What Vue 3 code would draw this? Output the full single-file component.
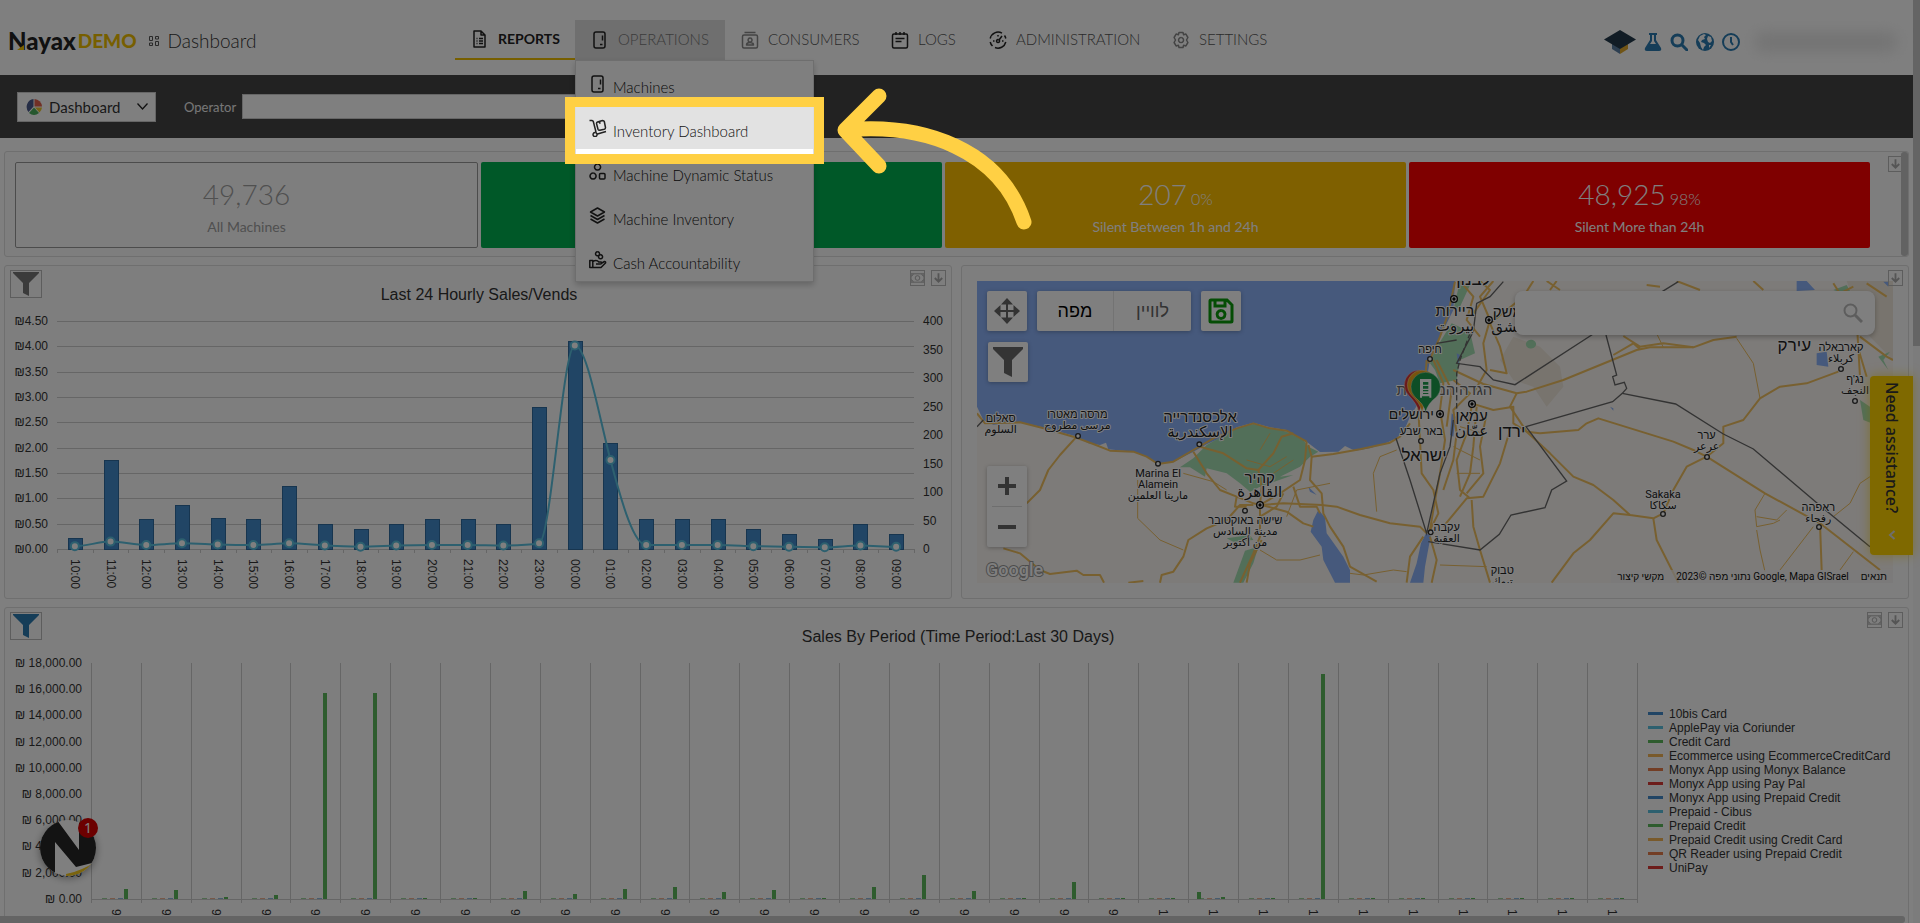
<script setup>
const icons = {
    report: 'M3 1h7l4 4v12H3zM10 1v4h4M5.500 8.500h1M8 8.500h4M5.500 11h1M8 11h4M5.500 13.500h1M8 13.500h4',
    machine: 'M5 1h7q2 0 2 2v12q0 2-2 2H5q-2 0-2-2V3q0-2 2-2zM11.500 4.500v5M9 13.500h2.500',
    consumer: 'M3 4h12q1.500 0 1.500 1.500v10q0 1.500-1.500 1.500H3q-1.500 0-1.500-1.500v-10Q1.500 4 3 4zM3.500 1.500h11M9 7a2 2 0 1 0 .1 0M5.500 14q0-2.500 3.500-2.500t3.500 2.500z',
    log: 'M3 3h12q1.500 0 1.500 1.500v11q0 1.500-1.500 1.500H3q-1.500 0-1.500-1.500v-11Q1.500 3 3 3zM5 1v3M9 1v3M13 1v3M4.500 7.500h9M4.500 10.500h6',
    gauge: 'M3.500 15A8 8 0 0 1 1.200 11M1.200 7.500A8 8 0 0 1 13 2.200M15.500 4.500A8 8 0 0 1 16.800 7.500M16.800 11A8 8 0 0 1 6 16.500M9 8.500a1.500 1.500 0 1 0 .1 0M10 9l3-4M4 10h1.500M9 4v1.500M13 10h1.500',
    gear: 'M7 1.500h4l.6 2.200 2.300-.6 2 3.400L14.500 9l1.400 2.500-2 3.400-2.300-.6L11 16.500H7l-.6-2.200-2.300.6-2-3.400L3.500 9 2.100 6.500l2-3.400 2.300.6zM9 6.500a2.500 2.500 0 1 0 .1 0',
    trolley: 'M.5 1.500h2.500q1 0 1.300 1L7 13M6 13.500a2 2 0 1 0 .1 0M8.500 15l8.500-2.500M8.500 3l5-1.500q1.500 0 1.800 1L16.500 8.500q0 1.500-1.200 1.800l-4.500 1q-1.500 0-1.800-1L7.500 4.500q0-1.200 1-1.500zM10.500 2.800l.6 2',
    nodes: 'M8.500 1a3 3 0 1 0 .1 0M4 10a3 3 0 1 0 .1 0M11.500 10.500h3.500q1 0 1 1V15q0 1-1 1h-3.500q-1 0-1-1v-3.500q0-1 1-1z',
    layers: 'M8.500 1l7 4-7 4-7-4zM1.500 8.500l7 4 7-4M1.500 12l7 4 7-4',
    cash: 'M8.500 .8a2 2 0 1 0 .1 0M11.500 3.800a2 2 0 1 0 .1 0M.8 9.500h3v7h-3zM3.800 10.500q4-2 6 .5h2.500q1 2-1 2H7M12 12.500l3.500-2q1.500 0 1 1.500l-4.500 4.500H3.800'
}

const nav = [
    { text: 'REPORTS', icon: 'report', state: 'current' },
    { text: 'OPERATIONS', icon: 'machine', state: 'open' },
    { text: 'CONSUMERS', icon: 'consumer', state: 'pale' },
    { text: 'LOGS', icon: 'log' },
    { text: 'ADMINISTRATION', icon: 'gauge' },
    { text: 'SETTINGS', icon: 'gear', state: 'pale' }
]

const menu = [
    { text: 'Machines', icon: 'machine' },
    { text: 'Inventory Dashboard', icon: 'trolley', active: true },
    { text: 'Machine Dynamic Status', icon: 'nodes' },
    { text: 'Machine Inventory', icon: 'layers' },
    { text: 'Cash Accountability', icon: 'cash' }
]

const cards = [
    { value: '49,736', label: 'All Machines', color: 'plain' },
    { value: '', label: '', color: 'green' },
    { value: '207', share: '0%', label: 'Silent Between 1h and 24h', color: 'amber' },
    { value: '48,925', share: '98%', label: 'Silent More than 24h', color: 'red' }
]

// hourly chart
const amounts = [.22, 1.76, .6, .87, .62, .6, 1.25, .5, .4, .5, .6, .6, .5, 2.8, 4.1, 2.1, .6, .6, .6, .4, .3, .2, .5, .3]
const vends = [5, 13, 7, 10, 8, 7, 10, 6, 4, 6, 7, 7, 6, 10, 357, 156, 7, 7, 7, 5, 4, 3, 6, 4]
const hourStep = 857 / 24
const hours = amounts.map((amount, i) => ({
    x: 57 + hourStep * (i + .5),
    bar: amount / 4.5 * 228,
    y: 549 - vends[i] / 400 * 228,
    label: String((i + 10) % 24).padStart(2, '0') + ':00'
}))

// monotone curve: the tangent is flat wherever the direction changes
function slope(i) {
    if(i === 0 || i === hours.length - 1) return 0
    const a = hours[i].y - hours[i - 1].y
    const b = hours[i + 1].y - hours[i].y
    return a * b <= 0 ? 0 : 2 * a * b / (a + b) * 1.4
}
const vendLine = hours.map((p, i) => {
    if(i === 0) return `M${p.x} ${p.y}`
    const q = hours[i - 1]
    const d = hourStep / 3
    return `C${q.x + d} ${q.y + slope(i - 1) / 3} ${p.x - d} ${p.y - slope(i) / 3} ${p.x} ${p.y}`
}).join('')

// sales by period
const dayHeights = [10, 9, 2, 4, 206, 206, 1, 1, 8, 5, 10, 12, 7, 9, 1, 12, 24, 8, 1, 17, 1, 1, 2, 1, 225, 1, 1, 1, 1, 1, 1]
const dayStep = 1546 / 31
const days = dayHeights.map((height, i) => ({
    x: 91 + Math.round(dayStep * i),
    height,
    label: i < 21 ? `9/${i + 10}/2023` : `10/${i - 20}/2023`
}))

const legend = [
    ['10bis Card', '#428bca'],
    ['ApplePay via Coriunder', '#5bc0de'],
    ['Credit Card', '#5cb85c'],
    ['Ecommerce using EcommerceCreditCard', '#f2b557'],
    ['Monyx App using Monyx Balance', '#e67d4a'],
    ['Monyx App using Pay Pal', '#da3b36'],
    ['Monyx App using Prepaid Credit', '#428bca'],
    ['Prepaid - Cibus', '#5bc0de'],
    ['Prepaid Credit', '#5cb85c'],
    ['Prepaid Credit using Credit Card', '#f2b557'],
    ['QR Reader using Prepaid Credit', '#e67d4a'],
    ['UniPay', '#da3b36']
]

// map, drawn at three units per pixel
const roads = [
    'M51 460L75 490L180 487L260 507L340 530L400 552L450 572L520 575L560 590L594 612L640 605L700 570L760 535L830 505L880 490L930 505L980 512L1040 545',
    'M350 530L300 585L265 630L240 690L200 730',
    'M130 865L180 880L240 930L270 942L350 932L370 945L420 945L432 968',
    'M505 968L550 963M600 968L605 945L640 935L670 890L685 840L740 805L800 780L840 735L880 735',
    'M700 575L740 640L780 690L830 710L880 730L900 735',
    'M720 560L790 580L860 625L895 630L905 680L900 735',
    'M830 710L825 740L860 740M895 630L940 580L965 530L1000 520',
    'M900 735L960 700L1020 660L1035 600L1040 545',
    'M900 735L970 730L1085 735L1130 740L1200 765L1290 790L1380 800L1400 820',
    'M1045 555L1055 590L1120 582L1200 568L1290 548L1320 530L1350 490',
    'M1055 590L1050 660L1085 700L1090 760L1110 800L1150 860L1170 920L1250 965',
    'M900 745L900 830L880 880L840 968M905 840L870 910L860 968M905 735L980 755L1030 790L1060 800',
    'M1000 680L1020 740L1070 740L1080 760M970 700L950 740L900 770',
    'M1410 830L1430 900L1415 968M1340 968L1350 890L1390 830',
    'M1400 300L1395 370L1375 450L1380 540L1385 640L1420 690L1435 760L1405 820',
    'M1420 300L1450 370L1440 450L1455 540L1440 640L1425 720L1410 810M1430 300L1475 390L1460 500',
    'M1485 65L1465 160L1440 230L1405 310',
    'M1500 63L1540 110L1520 180L1560 230M1600 63L1560 110L1590 180L1570 250L1580 330L1540 400',
    'M1560 63L1590 90L1540 160M1720 63L1690 110L1640 150L1590 190L1620 260L1640 340L1590 330',
    'M1760 63L1800 90M1770 90L1790 63M2060 75L2100 80M2150 63L2220 90M2380 63L2410 90',
    'M1480 330L1570 372L1670 400L1700 395L1810 360L2030 270L2070 262L2200 262L2260 240L2330 230',
    'M1960 285L2020 250L2040 268M1990 228L2040 260L2110 250L2200 262',
    'M1700 515L1740 520L1855 510L1880 490L1915 475L2140 545L2200 570L2240 590L2415 700L2580 790L2760 930',
    'M2240 590L2290 550L2290 500L2350 480L2400 415L2460 380L2540 370L2635 335',
    'M2240 590L2180 620L2140 690L2110 760L2080 775L2010 765L1960 720L1900 675L1840 650L1770 580L1700 515L1650 440L1670 400',
    'M2010 765L1960 760L1890 840L1840 880L1775 968M2080 775L2090 840L2155 968',
    'M2580 790L2585 930M1535 430L1600 450L1660 440L1660 490L1700 515M1650 510L1620 610L1570 710L1520 715L1450 800',
    'M1535 720L1540 800L1560 870L1590 968M1535 440L1520 520L1490 600L1500 690L1530 715M1550 440L1540 560L1530 640L1500 710',
    'M1480 360L1530 400L1480 450L1490 520L1480 600L1450 690M1580 460L1560 560L1570 640L1520 700',
    'M2620 70L2690 180L2700 350M2720 70L2780 110M2640 100L2680 80M2700 230L2780 290L2799 300M2690 250L2720 350'
]
const thinRoads = [
    'M533 660L533 775L600 840L670 870',
    'M1310 570L1260 590L1240 640L1250 755',
    'M900 870L950 900L1020 900L1080 885M1170 940L1210 945L1300 930L1340 935',
    'M930 520L900 570M860 600L930 620L980 590M940 640L1000 600',
    'M670 640L760 665L800 690M980 770L1010 690L1110 670',
    'M2330 235L2380 310L2400 415M2080 200L2110 262',
    'M2415 700L2385 750L2390 800L2440 790L2460 780M2390 770L2450 780L2480 750M2390 810L2400 870L2415 935M2560 800L2460 930',
    'M2620 770L2670 730L2700 670L2730 650M2680 875L2640 930',
    'M1440 915L1580 920M1480 560L1560 600M1500 500L1570 520M1490 640L1560 640'
]
const borders = [
    'M1630 65L1590 110L1550 130L1540 215L1490 310L1560 320L1600 360L1665 374L1895 225L2155 65',
    'M1938 225L1970 345L1958 350L1965 375L1993 367L2000 385L1987 400L1958 425L1698 500L1820 663L1775 690L1755 743L1653 765L1618 823L1560 870L1405 845',
    'M1308 535L1350 660L1400 820L1440 640L1470 560L1480 480',
    'M1987 400L2147 432L2290 522L2380 567L2578 735L2730 860',
    'M51 500L70 480M1430 250L1490 240'
]
const places = [
    { x: 122, y: 487, size: 33, lines: ['סאלום', 'السلوم'] },
    { x: 352, y: 474, size: 33, lines: ['מרסה מאטרו', 'مرسى مطروح'], dot: [354, 528] },
    { x: 720, y: 487, size: 45, lines: ['אלכסנדרייה', 'الإسكندرية'], dot: [718, 553] },
    { x: 594, y: 650, size: 33, lines: ['Marina El', 'Alamein', 'مارينا العلمين'], dot: [594, 611] },
    { x: 899, y: 668, size: 45, lines: ['קהיר', 'القاهرة'], capital: [900, 735] },
    { x: 856, y: 793, size: 33, lines: ['שישה באוקטובר', 'مدينة السادس', 'من أكتوبر'], dot: [855, 752] },
    { x: 1540, y: 75, size: 51, lines: ['לבנון'], capital: [1482, 117] },
    { x: 1485, y: 168, size: 45, lines: ['ביירות', 'بيروت'] },
    { x: 1655, y: 172, size: 45, lines: ['דמשק', 'دمشق'], capital: [1587, 180] },
    { x: 1410, y: 278, size: 33, lines: ['חיפה'], dot: [1410, 297] },
    { x: 1453, y: 405, size: 45, lines: ['הגדה המערבית'], pale: true },
    { x: 1354, y: 476, size: 42, lines: ['ירושלים'], capital: [1440, 462] },
    { x: 1384, y: 526, size: 33, lines: ['באר שבע'], dot: [1383, 543] },
    { x: 1392, y: 602, size: 51, lines: ['ישראל'] },
    { x: 1535, y: 483, size: 45, lines: ['עמאן', 'عمّان'], capital: [1536, 432] },
    { x: 1655, y: 532, size: 51, lines: ['ירדן'] },
    { x: 1460, y: 812, size: 33, lines: ['עקבה', 'العقبة'], dot: [1412, 817] },
    { x: 1627, y: 942, size: 33, lines: ['טבוק', 'تبوك'] },
    { x: 2503, y: 273, size: 51, lines: ['עירק'] },
    { x: 2643, y: 273, size: 33, lines: ['קארבאלה', 'كربلاء'], dot: [2643, 327] },
    { x: 2685, y: 370, size: 33, lines: ["נג'ף", 'النجف'], dot: [2685, 423] },
    { x: 2240, y: 538, size: 33, lines: ['ערר', 'عرعر'], dot: [2241, 591] },
    { x: 2109, y: 713, size: 33, lines: ['Sakaka', 'سكاكا'], dot: [2109, 762] },
    { x: 2575, y: 754, size: 33, lines: ['ראפהה', 'رفحاء'], dot: [2577, 801] }
]
</script>

<template>
    <div class="screen">
        <header class="top">
            <div class="brand">
                <span class="logo">Nayax<i></i></span>
                <span class="demo">DEMO</span>
                <svg class="grid-icon" viewBox="0 0 10 10" width="10" height="10">
                    <path d="M.5.5h3v4h-3zM6.500.5h3v2.500h-3zM.5 7h3v2.500h-3zM6.500 5.500h3v4h-3z" fill="none" stroke="#555" />
                </svg>
                <span class="page-name">Dashboard</span>
            </div>
            <nav class="nav">
                <a v-for="item in nav" :key="item.text" href="#" :class="item.state">
                    <svg class="line-icon" viewBox="0 0 18 18"><path :d="icons[item.icon]" /></svg>
                    <span>{{ item.text }}</span>
                </a>
                <div class="dropdown">
                    <a v-for="item in menu" :key="item.text" href="#" :class="{ active: item.active }">
                        <svg class="line-icon" viewBox="0 0 18 18"><path :d="icons[item.icon]" /></svg>
                        <span>{{ item.text }}</span>
                    </a>
                </div>
            </nav>
            <div class="tools">
                <svg viewBox="0 0 32 24" width="32" height="24">
                    <path d="M8 13v6l8 5v-8z" fill="#5b7fa3" /><path d="M24 13v6l-8 5v-8z" fill="#e0a92c" />
                    <path d="M16 0l16 9.500L16 19 0 9.500z" fill="#22394a" />
                </svg>
                <svg viewBox="0 0 18 18" width="18" height="18">
                    <path d="M5 0h8v2h-1v5l5 8q1 3-2 3H3q-3 0-2-3l5-8V2H5zM8 2v6l-2 3h6l-2-3V2z" fill="#2a7ab0" fill-rule="evenodd" />
                </svg>
                <svg viewBox="0 0 18 18" width="18" height="18">
                    <circle cx="7.500" cy="7.500" r="5.500" fill="none" stroke="#2a7ab0" stroke-width="3" />
                    <path d="M12 12l5 5" stroke="#2a7ab0" stroke-width="3" stroke-linecap="round" />
                </svg>
                <svg viewBox="0 0 18 18" width="18" height="18">
                    <circle cx="9" cy="9" r="9" fill="#2a7ab0" />
                    <path d="M4 3l4-2 2 1-2 2 1 2-3 1-1 2 3 1 2 2-2 2-1 3-2-3-1-4-2-3zM12 3l3 1 1 4-2 2-2-1-1-3zM13 12l2 0-2 3z" fill="#fff" />
                </svg>
                <svg viewBox="0 0 18 18" width="18" height="18">
                    <circle cx="9" cy="9" r="8" fill="none" stroke="#2a7ab0" stroke-width="2" />
                    <path d="M9 4v5l2 3" fill="none" stroke="#2a7ab0" stroke-width="2" />
                </svg>
                <span class="user"></span>
            </div>
        </header>

        <div class="filters">
            <button class="picker" type="button">
                <svg viewBox="0 0 16 16" width="16" height="16">
                    <path d="M7.500 7.500V0A8 8 0 0 0 2.500 13z" fill="#4a5a8c" />
                    <path d="M8.500 7.500V0A8 8 0 0 1 16 7.500z" fill="#e0604c" />
                    <path d="M9 8.500h7a8 8 0 0 1-2.500 5z" fill="#e8c430" />
                    <path d="M8 8.500l5 5.500a8 8 0 0 1-10 0z" fill="#4cae5c" />
                </svg>
                <span>Dashboard</span>
                <svg viewBox="0 0 11 7" width="11" height="7"><path d="M.5.5l5 5.500 5-5.500" fill="none" stroke="#222" stroke-width="1.300" /></svg>
            </button>
            <label for="operator">Operator</label>
            <input id="operator" type="text">
        </div>

        <main class="content">
            <section class="panel kpis">
                <div v-for="card in cards" :key="card.color" class="card" :class="card.color">
                    <div class="number"><span>{{ card.value }}</span><small v-if="card.share">{{ card.share }}</small></div>
                    <div class="caption">{{ card.label }}</div>
                </div>
                <button class="mini down" type="button" aria-label="Download"><svg viewBox="0 0 14 14"><path d="M7 2v9M3 7l4 4 4-4" /></svg></button>
                <span class="kpi-scroll"></span>
            </section>

            <div class="row">
                <section class="panel">
                    <svg class="chart" viewBox="5 266 946 332">
                        <text class="title" x="479" y="300" text-anchor="middle">Last 24 Hourly Sales/Vends</text>
                        <g v-for="n in 10" :key="n">
                            <path class="axis" :d="`M57 ${Math.round(321 + (n - 1) * 25.33) + .5}H914`" />
                            <text x="48" :y="325 + (n - 1) * 25.33" text-anchor="end">₪{{ (5 - n * .5).toFixed(2) }}</text>
                        </g>
                        <text v-for="n in 9" :key="n" x="923" :y="325 + (n - 1) * 28.5">{{ 450 - n * 50 }}</text>
                        <path v-for="n in 25" :key="n" class="axis" :d="`M${Math.round(57 + (n - 1) * hourStep) + .5} 549v4`" />
                        <g v-for="h in hours" :key="h.label">
                            <rect class="bar" :x="Math.round(h.x - 7) + .5" :y="Math.round(549 - h.bar) + .5" width="14" :height="Math.round(h.bar)" />
                            <text :transform="`translate(${h.x - 4} 559) rotate(90)`">{{ h.label }}</text>
                        </g>
                        <path :d="vendLine" fill="none" stroke="#5bc0de" stroke-width="2" />
                        <circle v-for="h in hours" :key="h.label" :cx="h.x" :cy="h.y" r="4" fill="#fff" stroke="#5bc0de" stroke-width="2" />
                    </svg>
                    <button class="funnel" type="button" aria-label="Filter"><svg viewBox="0 0 26 26"><path d="M0 1h26v1L16 12v13l-6-3V12L0 2z" /></svg></button>
                    <div class="minis">
                        <button class="mini" type="button" aria-label="Currency"><svg class="note" viewBox="0 0 14 14"><path d="M0 2.500h14v9H0zM0 5q2 0 2.500-2.500M14 5q-2 0-2.500-2.500M0 9q2 0 2.500 2.500M14 9q-2 0-2.500 2.500" /><circle cx="7" cy="7" r="2.500" /></svg></button>
                        <button class="mini" type="button" aria-label="Download"><svg viewBox="0 0 14 14"><path d="M7 2v9M3 7l4 4 4-4" /></svg></button>
                    </div>
                </section>

                <section class="panel map-panel">
                    <div class="map">
                        <svg class="land" viewBox="51 63 2748 906" preserveAspectRatio="xMidYMid slice">
                            <rect x="51" y="63" width="2748" height="906" fill="#faf6f2" />
                            <g fill="#f0e8dc">
                                <path d="M1660 230L1740 260L1800 320L1810 380L1760 440L1720 380L1660 360L1620 300z" />
                                <path d="M2660 63L2799 63L2799 300L2720 220z" />
                            </g>
                            <path d="M51 63H1485L1480 150L1455 200L1430 250L1410 297L1400 360L1375 430L1350 470L1335 505L1310 535L1280 548L1230 565L1185 572L1155 558L1135 575L1080 576L1040 545L980 510L930 502L880 488L830 502L790 530L740 553L700 575L640 606L594 612L560 590L520 575L445 568L438 548L420 555L385 550L345 528L260 505L180 486L100 494L70 480L51 440z" fill="#8cb2f8" />
                            <g fill="#a4deb2">
                                <path d="M740 555L830 505L880 492L980 515L1030 540L1045 560L1075 575L1050 590L1020 620L960 650L1000 645L900 680L870 695L840 670L800 640L740 625L735 650L690 622L660 622L700 595z" />
                                <path d="M855 872L895 860L880 910L850 968H820zM800 835L870 825L880 840L820 845z" />
                                <path d="M1475 190L1530 215L1545 280L1500 300L1490 360L1440 370L1425 330L1410 310L1425 270z" />
                                <path d="M1500 63L1530 75L1500 140L1480 150zM1698 250a15 13 0 1 0 30 5a15 13 0 1 0-30-5z" />
                                <path d="M2700 420L2730 440L2735 490L2710 480zM2620 90L2660 75L2680 110zM2755 290L2790 275L2770 300L2785 330z" />
                            </g>
                            <g fill="#8cb2f8">
                                <path d="M1075 750L1095 772L1100 820L1150 890L1170 930V968H1125L1090 900L1085 860L1052 815L1060 780z" />
                                <path d="M1398 820L1412 828L1395 920L1390 968H1350L1370 910L1383 850z" />
                                <path d="M1045 680L1070 705L1050 695zM1475 460L1487 470L1480 530L1470 525zM1490 280L1500 285L1495 315z" />
                                <path d="M2510 63H2540L2565 90L2510 93zM2570 280L2600 275L2605 320L2570 315zM2770 65L2785 65V80zM1950 440L1960 445V452z" />
                            </g>
                            <path v-for="d in thinRoads" :key="d" :d="d" class="road thin" />
                            <path v-for="d in roads" :key="d" :d="d" class="road" />
                            <path v-for="d in borders" :key="d" :d="d" class="border" />
                            <path class="border" d="M1530 220L1500 300L1490 340V460" stroke-dasharray="16 8" />
                            <g v-for="place in places" :key="place.lines[0]">
                                <circle v-if="place.dot" :cx="place.dot[0]" :cy="place.dot[1]" r="7" fill="#fff" stroke="#333" stroke-width="4" />
                                <template v-if="place.capital">
                                    <circle :cx="place.capital[0]" :cy="place.capital[1]" r="10" fill="#fff" stroke="#111" stroke-width="4" />
                                    <circle :cx="place.capital[0]" :cy="place.capital[1]" r="5" fill="#111" />
                                </template>
                                <text
                                    v-for="(line, i) in place.lines"
                                    :key="line"
                                    :x="place.x"
                                    :y="place.y + i * (place.size > 40 ? 44 : 33)"
                                    :font-size="place.size"
                                    :class="{ pale: place.pale }"
                                >{{ line }}</text>
                            </g>
                            <g stroke="#fff" stroke-width="1">
                                <path d="M1377 455Q1370 430 1345 405A44 44 0 1 1 1409 405Q1384 430 1377 455z" fill="#d63434" />
                                <path d="M1386 455Q1380 430 1354 405A44 44 0 1 1 1418 405Q1392 430 1386 455z" fill="#f0a81c" />
                                <path d="M1397 455Q1390 430 1365 411A44 44 0 1 1 1429 411Q1404 430 1397 455z" fill="#1c9c4c" />
                            </g>
                            <path d="M1380 357h34v56h-6v-4h-22v4h-6z" fill="#fff" />
                            <path d="M1389 366h16v8h-16zM1389 378h16v8h-16zM1389 390h16v4h-16zM1389 399h16v3h-16z" fill="#1c9c4c" />
                        </svg>
                        <button class="map-btn pan" type="button" aria-label="Move map">
                            <svg viewBox="0 0 26 26" width="26" height="26"><path d="M13 0l6 6.500h-5V12h5.500V7l6.500 6-6.500 6v-5H14v5.500h5L13 26l-6-6.500h5V14H6.500v5L0 13l6.500-6v5H12V6.500H7z" fill="#666" /></svg>
                        </button>
                        <div class="map-type">
                            <button type="button" class="on">מפה</button>
                            <button type="button">לוויין</button>
                        </div>
                        <button class="map-btn save" type="button" aria-label="Save">
                            <svg viewBox="0 0 26 26" width="26" height="26"><path d="M3 2h16l5 5v16q0 1-1 1H3q-1 0-1-1V3q0-1 1-1zM7 2v6h10V2M13 12.500a4 4 0 1 0 .1 0" fill="none" stroke="#0a9a0a" stroke-width="3" /></svg>
                        </button>
                        <button class="map-btn map-filter" type="button" aria-label="Filter map">
                            <svg viewBox="0 0 30 30" width="30" height="30"><path d="M0 0h30v2L19 13v17l-8-4V13L0 2z" fill="#686868" /></svg>
                        </button>
                        <div class="zoom">
                            <button type="button" aria-label="Zoom in"><svg viewBox="0 0 18 18" width="18" height="18"><path d="M9 0v18M0 9h18" stroke="#666" stroke-width="4" /></svg></button>
                            <button type="button" aria-label="Zoom out"><svg viewBox="0 0 18 18" width="18" height="18"><path d="M0 9h18" stroke="#666" stroke-width="4" /></svg></button>
                        </div>
                        <div class="map-search">
                            <input type="text" aria-label="Search the map">
                            <svg viewBox="0 0 20 20" width="20" height="20"><circle cx="7.500" cy="7.500" r="6" fill="none" stroke="#bbb" stroke-width="2" /><path d="M12 12l7 7" stroke="#bbb" stroke-width="3" /></svg>
                        </div>
                        <span class="google">Google</span>
                        <div class="terms"><span>מקשי קיצור</span><span>נתוני מפה ©2023 Google, Mapa GISrael</span><span>תנאים</span></div>
                    </div>
                    <div class="minis">
                        <button class="mini" type="button" aria-label="Download"><svg viewBox="0 0 14 14"><path d="M7 2v9M3 7l4 4 4-4" /></svg></button>
                    </div>
                </section>
            </div>

            <section class="panel">
                <svg class="chart" viewBox="5 608 1903 380">
                    <text class="title" x="958" y="642" text-anchor="middle">Sales By Period (Time Period:Last 30 Days)</text>
                    <text v-for="n in 10" :key="n" x="82" :y="667 + (n - 1) * 26.2" text-anchor="end">₪ {{ ((10 - n) * 2000).toLocaleString('en-US') }}.00</text>
                    <path class="axis" d="M91 899.500H1637" />
                    <path v-for="day in days" :key="day.x" class="axis" :d="`M${day.x + .5} 663V903`" />
                    <path class="axis" d="M1637.500 663V903" />
                    <g v-for="(day, i) in days" :key="day.label">
                        <g opacity=".6">
                            <rect :x="day.x + 11" y="898" width="5" height="1" fill="#5cb85c" />
                            <rect :x="day.x + 19" y="898" width="5" height="1" fill="#e67d4a" />
                            <rect :x="day.x + 27" y="898" width="5" height="1" fill="#428bca" />
                        </g>
                        <rect :x="day.x + 33" :y="899 - day.height" width="4" :height="day.height" fill="#5cb85c" />
                        <rect v-if="i === 22" :x="day.x + 9" y="892" width="4" height="7" fill="#5cb85c" />
                        <text :transform="`translate(${day.x + 21} 909) rotate(90)`">{{ day.label }}</text>
                    </g>
                    <g v-for="(entry, i) in legend" :key="entry[0]">
                        <rect x="1648" :y="712 + i * 14" width="15" height="3" :fill="entry[1]" />
                        <text x="1669" :y="718 + i * 14">{{ entry[0] }}</text>
                    </g>
                </svg>
                <button class="funnel blue" type="button" aria-label="Filter"><svg viewBox="0 0 26 26"><path d="M0 1h26v1L16 12v13l-6-3V12L0 2z" /></svg></button>
                <div class="minis">
                    <button class="mini" type="button" aria-label="Currency"><svg class="note" viewBox="0 0 14 14"><path d="M0 2.500h14v9H0zM0 5q2 0 2.500-2.500M14 5q-2 0-2.500-2.500M0 9q2 0 2.500 2.500M14 9q-2 0-2.500 2.500" /><circle cx="7" cy="7" r="2.500" /></svg></button>
                    <button class="mini" type="button" aria-label="Download"><svg viewBox="0 0 14 14"><path d="M7 2v9M3 7l4 4 4-4" /></svg></button>
                </div>
            </section>
        </main>

        <button class="assist" type="button">Need assistance?
            <svg viewBox="0 0 8 10" width="8" height="10"><path d="M6.500 1L2 5l4.500 4" fill="none" stroke="#ddd" stroke-width="2" /></svg>
        </button>

        <button class="chat" type="button" aria-label="Chat">
            <svg viewBox="0 0 56 56" width="56" height="56">
                <defs><clipPath id="disc"><circle cx="28" cy="28" r="28" /></clipPath></defs>
                <g clip-path="url(#disc)">
                    <rect width="56" height="56" fill="#fff" />
                    <path d="M0 0H17L39 30V0H56V42L36 47L15 22V56H0z" fill="#262626" />
                    <path d="M26 54Q42 51 56 41V56H26z" fill="#f5c81e" />
                </g>
            </svg>
            <span class="badge">1</span>
        </button>

        <div class="scroll-y"></div>
        <div class="scroll-x"></div>

        <div class="spotlight"></div>
        <svg class="arrow" viewBox="830 80 210 160" width="210" height="160">
            <path d="M846 130C925 123 1000 150 1024 222M879 96L845 130L879 166" />
        </svg>
    </div>
</template>

<style>
body {
    margin: 0;
}
</style>

<style scoped>
.screen {
    position: relative;
    height: 100vh;
    overflow: hidden;
    box-sizing: border-box;
    padding-right: 7px;
    background: #fff;
    color: #333;
    font-family: Lato, "Liberation Sans", sans-serif;
}

a {
    color: inherit;
    text-decoration: none;
}

button {
    padding: 0;
    border: 0;
    background: none;
    font: inherit;
    color: inherit;
}

.line-icon {
    width: 18px;
    height: 18px;
    flex: none;
    fill: none;
    stroke: #222;
    stroke-width: 1.5;
    stroke-linejoin: round;
}

.top {
    position: relative;
    z-index: 3;
    display: flex;
    height: 75px;
}

.brand {
    display: flex;
    align-items: center;
    box-sizing: border-box;
    width: 455px;
    padding: 6px 0 0 8px;
}

.logo {
    position: relative;
    color: #222;
    font-size: 24px;
    font-weight: 900;
}

.logo i {
    position: absolute;
    left: 9px;
    bottom: 5px;
    border-bottom: 5px solid #f5c400;
    border-left: 7px solid transparent;
}

.demo {
    margin-left: 2px;
    color: #efbe00;
    font-size: 19px;
    font-weight: 900;
}

.grid-icon {
    margin: 0 9px 0 12px;
}

.page-name {
    font-size: 19px;
    font-weight: 300;
}

.nav {
    position: relative;
    display: grid;
    grid-template-columns: 120px 150px 150px 98px 183px 128px;
    height: 40px;
    margin-top: 20px;
    color: #555;
    font-size: 15px;
    font-weight: 300;
}

.nav > a {
    display: flex;
    align-items: center;
    gap: 9px;
    padding-left: 16px;
}

.nav > a span {
    padding-bottom: 2px;
}

.nav .current {
    border-bottom: 2px solid #efbe00;
    color: #222;
    font-size: 14px;
    font-weight: 700;
}

.nav .open {
    background: #dedede;
    color: #777;
}

.nav .pale .line-icon {
    stroke: #888;
}

.dropdown {
    position: absolute;
    top: 40px;
    left: 120px;
    box-sizing: border-box;
    width: 239px;
    height: 222px;
    padding-top: 2px;
    border: 1px solid #ddd;
    background: #fff;
    box-shadow: 0 3px 6px #0003;
    color: #111;
}

.dropdown a {
    display: flex;
    align-items: center;
    gap: 6px;
    height: 42px;
    margin-bottom: 2px;
    padding-left: 13px;
}

.dropdown span {
    padding-top: 6px;
}

.dropdown .active {
    background: #e2e2e2;
}

.tools {
    display: flex;
    align-items: center;
    gap: 8px;
    margin-left: auto;
    padding: 8px 17px 0 0;
}

.user {
    width: 140px;
    height: 18px;
    margin-left: 8px;
    background: #e4e4e4;
    filter: blur(8px);
}

.filters {
    display: flex;
    align-items: center;
    height: 63px;
    padding-left: 17px;
    background: #444;
}

.picker {
    display: flex;
    align-items: center;
    gap: 7px;
    width: 139px;
    height: 30px;
    box-sizing: border-box;
    padding: 0 7px 0 8px;
    border: 1px solid #ccc;
    background: #fff;
    font-size: 15px;
}

.picker span {
    flex: 1;
    text-align: left;
}

.filters label {
    margin: 0 6px 0 28px;
    color: #eee;
    font-size: 13px;
}

.filters input {
    width: 420px;
    height: 25px;
    box-sizing: border-box;
    border: 1px solid #ccc;
    background: #fff;
}

.content {
    display: flex;
    flex-direction: column;
    gap: 8px;
    padding: 13px 4px 0;
}

.panel {
    position: relative;
    box-sizing: border-box;
    border: 1px solid #dedede;
    border-radius: 3px;
    background: #fdfdfd;
}

.kpis {
    display: flex;
    gap: 3px;
    padding: 10px 38px 8px 10px;
}

.card {
    flex: 1;
    box-sizing: border-box;
    height: 86px;
    padding-top: 14px;
    border-radius: 2px;
    color: #fff;
    text-align: center;
}

.number {
    display: flex;
    align-items: baseline;
    justify-content: center;
    gap: 4px;
    height: 36px;
    font-size: 28px;
    font-weight: 300;
    line-height: 36px;
}

.number small {
    font-size: 16px;
}

.caption {
    margin-top: 6px;
    font-size: 14px;
    line-height: 18px;
}

.plain {
    border: 1px solid #999;
    color: #a0a0a0;
    padding-top: 13px;
}

.green {
    background: #00b050;
}

.amber {
    background: #ffc000;
}

.red {
    background: #f00;
}

.mini {
    display: block;
    width: 15px;
    height: 16px;
    border: 1px solid #bbb;
    box-sizing: border-box;
}

.mini svg {
    display: block;
    width: 13px;
    height: 14px;
    fill: none;
    stroke: #aaa;
    stroke-width: 2;
}

.mini .note {
    stroke-width: 1;
}

.minis {
    position: absolute;
    top: 4px;
    right: 5px;
    display: flex;
    gap: 6px;
}

.down {
    position: absolute;
    top: 4px;
    right: 5px;
}

.kpi-scroll {
    position: absolute;
    top: 0;
    right: 0;
    width: 7px;
    height: 104px;
    border-radius: 3px;
    background: #c4c4c4;
}

.row {
    display: grid;
    grid-template-columns: 1fr 1fr;
    gap: 9px;
}

.chart {
    display: block;
    width: 100%;
    font-family: "Liberation Sans", Arial, sans-serif;
    font-size: 12px;
    fill: #333;
}

.title {
    font-size: 16px;
}

.axis {
    fill: none;
    stroke: #ccc;
    shape-rendering: crispEdges;
}

.bar {
    fill: #428bca;
    stroke: #2f6a9e;
}

.funnel {
    position: absolute;
    top: 4px;
    left: 5px;
    width: 32px;
    height: 28px;
    border: 1px solid #bbb;
    box-sizing: border-box;
}

.funnel svg {
    display: block;
    width: 26px;
    height: 26px;
    margin: 0 auto;
    fill: #777;
}

.blue svg {
    fill: #2a7ab0;
}

.map-panel {
    padding: 15px;
}

.map {
    position: relative;
    height: 302px;
    overflow: hidden;
    font-family: Roboto, "Liberation Sans", sans-serif;
}

.land {
    display: block;
    width: 100%;
    height: 100%;
}

.land text {
    fill: #222;
    stroke: #fff;
    stroke-width: 6;
    stroke-linejoin: round;
    paint-order: stroke;
    text-anchor: middle;
    font-family: Roboto, "Liberation Sans", "DejaVu Sans", sans-serif;
}

.land .pale {
    fill: #666;
}

.road {
    fill: none;
    stroke: #f0c060;
    stroke-width: 6;
    stroke-linejoin: round;
}

.thin {
    stroke-width: 3;
}

.border {
    fill: none;
    stroke: #666;
    stroke-width: 4;
}

.map-btn,
.map-type,
.zoom {
    position: absolute;
    border-radius: 2px;
    background: #fff;
    box-shadow: 0 1px 4px #0004;
}

.map-btn {
    display: grid;
    place-items: center;
    width: 40px;
    height: 40px;
}

.pan {
    top: 10px;
    left: 10px;
}

.map-type {
    top: 10px;
    left: 60px;
    display: grid;
    grid-template-columns: 1fr 1fr;
    width: 154px;
    height: 40px;
    color: #666;
    font-size: 18px;
}

.map-type .on {
    border-right: 1px solid #e6e6e6;
    color: #000;
}

.save {
    top: 10px;
    left: 224px;
}

.map-filter {
    top: 61px;
    left: 11px;
}

.zoom {
    top: 185px;
    left: 10px;
    display: grid;
    width: 40px;
    height: 81px;
}

.zoom button {
    display: grid;
    place-items: center;
}

.zoom button + button {
    margin: 0 5px;
    border-top: 1px solid #ddd;
}

.map-search {
    position: absolute;
    top: 10px;
    right: 18px;
    display: flex;
    align-items: center;
    box-sizing: border-box;
    width: 360px;
    height: 44px;
    padding: 0 12px;
    border-radius: 8px;
    background: #fff;
    box-shadow: 0 2px 5px #0004;
}

.map-search input {
    flex: 1;
    border: 0;
    background: none;
}

.google {
    position: absolute;
    left: 9px;
    bottom: 3px;
    color: #fff;
    font-size: 18px;
    font-weight: 500;
    -webkit-text-stroke: 2px #999;
    paint-order: stroke;
}

.terms {
    position: absolute;
    right: 0;
    bottom: 0;
    display: flex;
    gap: 12px;
    padding: 0 6px;
    background: #f5f5f5b0;
    color: #111;
    font-size: 10px;
    line-height: 13px;
}

.assist {
    position: absolute;
    z-index: 2;
    top: 376px;
    right: 7px;
    display: flex;
    align-items: center;
    justify-content: space-between;
    box-sizing: border-box;
    width: 43px;
    height: 179px;
    padding: 6px 0 15px;
    border-radius: 4px 0 0 4px;
    background: #ffd200;
    box-shadow: 0 0 12px #ffd20099;
    color: #333;
    font-family: "Noto Sans", sans-serif;
    font-size: 16px;
    font-weight: 500;
    writing-mode: vertical-rl;
}

.chat {
    position: absolute;
    z-index: 2;
    left: 40px;
    bottom: 47px;
    width: 56px;
    height: 56px;
    border-radius: 50%;
    box-shadow: 0 2px 8px #0006;
}

.badge {
    position: absolute;
    top: -2px;
    right: -2px;
    width: 20px;
    height: 20px;
    border-radius: 50%;
    background: #d80000;
    color: #fff;
    font: 14px/20px "Noto Sans", sans-serif;
}

.scroll-y {
    position: absolute;
    top: 0;
    right: 0;
    width: 7px;
    height: 100%;
    background: linear-gradient(#c8c8c8 346px, #f8f8f8 0);
}

.scroll-x {
    position: absolute;
    z-index: 2;
    right: 15px;
    bottom: 0;
    left: 0;
    height: 7px;
    border-radius: 0 3px 3px 0;
    background: #c8c8c8;
}

/* everything outside the frame is dimmed by its shadow */
.spotlight {
    position: absolute;
    z-index: 5;
    top: 97px;
    left: 565px;
    box-sizing: border-box;
    width: 259px;
    height: 67px;
    border: 10px solid #ffd044;
    box-shadow: 0 0 0 2000px #00000080;
    pointer-events: none;
}

.arrow {
    position: absolute;
    z-index: 6;
    top: 80px;
    left: 830px;
    fill: none;
    stroke: #ffd044;
    stroke-width: 15;
    stroke-linecap: round;
    stroke-linejoin: round;
}
</style>
